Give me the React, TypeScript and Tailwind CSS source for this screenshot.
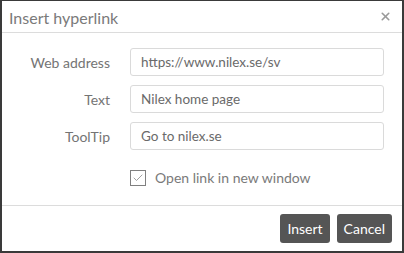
import { Check, X } from "lucide-react";

const fields = [
  { label: "Web address", value: "https://www.nilex.se/sv" },
  { label: "Text", value: "Nilex home page" },
  { label: "ToolTip", value: "Go to nilex.se" },
];

export default function App() {
  return (
    <div className="w-[404px] h-[253px] bg-white border-2 border-t border-[#3a3a3a] flex flex-col font-['Lato',sans-serif] text-[#666]">
      <div className="h-[32px] flex items-center justify-between pl-[7px] pr-[10px] border-b border-[#dcdcdc] shrink-0">
        <span className="text-[16px] text-[#7a7a7a] pt-[2px]">Insert hyperlink</span>
        <X className="w-[13px] h-[13px] text-[#9a9a9a]" strokeWidth={3} />
      </div>

      <div className="flex-1 flex flex-col pt-[15px] gap-[9px]">
        {fields.map((f) => (
          <div key={f.label} className="flex items-center">
            <label className="w-[108px] text-right text-[14px] text-[#747474]">{f.label}</label>
            <div className="ml-[20px] w-[254px] h-[28px] border border-[#dadada] rounded-[3px] flex items-center px-[10px] text-[13.5px] text-[#6a6a6a]">
              {f.value}
            </div>
          </div>
        ))}
        <div className="flex items-center ml-[128px] mt-[8px]">
          <div className="w-[16px] h-[16px] border border-[#808080] flex items-center justify-center">
            <Check className="w-[12px] h-[12px] text-[#808080]" strokeWidth={1.5} />
          </div>
          <span className="ml-[9px] text-[14px] text-[#7a7a7a]">Open link in new window</span>
        </div>
      </div>

      <div className="h-[46px] border-t border-[#dcdcdc] flex items-center justify-end gap-[7px] pr-[10px] shrink-0">
        <button className="h-[29px] px-[7px] rounded-[3px] bg-[#555] text-white text-[14px]">Insert</button>
        <button className="h-[29px] px-[7px] rounded-[3px] bg-[#555] text-white text-[14px]">Cancel</button>
      </div>
    </div>
  );
}
